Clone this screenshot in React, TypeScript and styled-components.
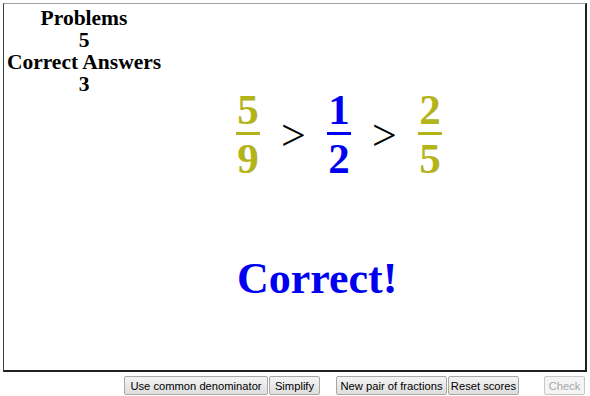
import { Fragment } from "react";
import styled, { createGlobalStyle } from "styled-components";

const GlobalStyle = createGlobalStyle`
    body {
        margin: 0;
        background: #fff;
        font-family: "Liberation Serif", "Times New Roman", serif;
    }
`;

const Page = styled.div`
    width: 590px;
    height: 396px;
    display: flex;
    flex-direction: column;
`;

const Board = styled.div`
    margin: 3px 3px 0 3px;
    height: 366px;
    border-top: 1px solid #a0a0a0;
    border-left: 1px solid #404040;
    border-right: 2px solid #202020;
    border-bottom: 2px solid #202020;
    display: flex;
    flex-direction: column;
`;

const Scores = styled.div`
    width: 160px;
    margin-top: 3px;
    text-align: center;
    font-weight: bold;
    font-size: 21.5px;
    line-height: 22px;
    color: #000;
    white-space: nowrap;
`;

const Compare = styled.div`
    display: flex;
    align-items: center;
    margin-left: 232px;
    margin-top: -5px;
`;

const Fraction = styled.div<{ $color: string }>`
    display: flex;
    flex-direction: column;
    align-items: center;
    width: 24px;
    color: ${(p) => p.$color};
    font-weight: bold;
    font-size: 43px;
    line-height: 40px;
`;

const Bar = styled.div<{ $color: string }>`
    width: 24px;
    height: 3px;
    margin: 2px 0 4px;
    background: ${(p) => p.$color};
`;

const Sign = styled.div`
    width: 67px;
    text-align: center;
    font-size: 44px;
    line-height: 40px;
    color: #000;
    margin-top: 3px;
`;

const Verdict = styled.div`
    margin-top: 74px;
    margin-left: 233px;
    color: #0000f0;
    font-weight: bold;
    font-size: 44px;
`;

const Toolbar = styled.div`
    display: flex;
    margin-top: 4px;
    padding-left: 124px;
`;

const Group = styled.div<{ $gap: number }>`
    display: flex;
    gap: 1px;
    margin-right: ${(p) => p.$gap}px;
`;

const Button = styled.button<{ $w: number }>`
    flex-shrink: 0;
    white-space: nowrap;
    width: ${(p) => p.$w}px;
    height: 19px;
    padding: 0;
    font-family: "Liberation Sans", Arial, sans-serif;
    font-size: 11.2px;
    color: #000;
    background: linear-gradient(#f4f4f4, #dedede);
    border: 1px solid #a8a8a8;
    border-radius: 2px;
    &:disabled {
        color: #a8a8a8;
        background: #f4f4f4;
        border-color: #c8c8c8;
    }
`;

const OLIVE = "#b3b31a";
const BLUE = "#0000f0";

const fractions = [
    { n: 5, d: 9, color: OLIVE },
    { n: 1, d: 2, color: BLUE },
    { n: 2, d: 5, color: OLIVE },
];

export default function App() {
    return (
        <Page>
            <GlobalStyle />
            <Board>
                <Scores>
                    <div>Problems</div>
                    <div>5</div>
                    <div>Correct Answers</div>
                    <div>3</div>
                </Scores>
                <Compare>
                    {fractions.map((f, i) => (
                        <Fragment key={i}>
                            {i > 0 && <Sign>&gt;</Sign>}
                            <Fraction $color={f.color}>
                                <span>{f.n}</span>
                                <Bar $color={f.color} />
                                <span>{f.d}</span>
                            </Fraction>
                        </Fragment>
                    ))}
                </Compare>
                <Verdict>Correct!</Verdict>
            </Board>
            <Toolbar>
                <Group $gap={16}>
                    <Button $w={144}>Use common denominator</Button>
                    <Button $w={51}>Simplify</Button>
                </Group>
                <Group $gap={25}>
                    <Button $w={111}>New pair of fractions</Button>
                    <Button $w={71}>Reset scores</Button>
                </Group>
                <Button $w={41} disabled>
                    Check
                </Button>
            </Toolbar>
        </Page>
    );
}
